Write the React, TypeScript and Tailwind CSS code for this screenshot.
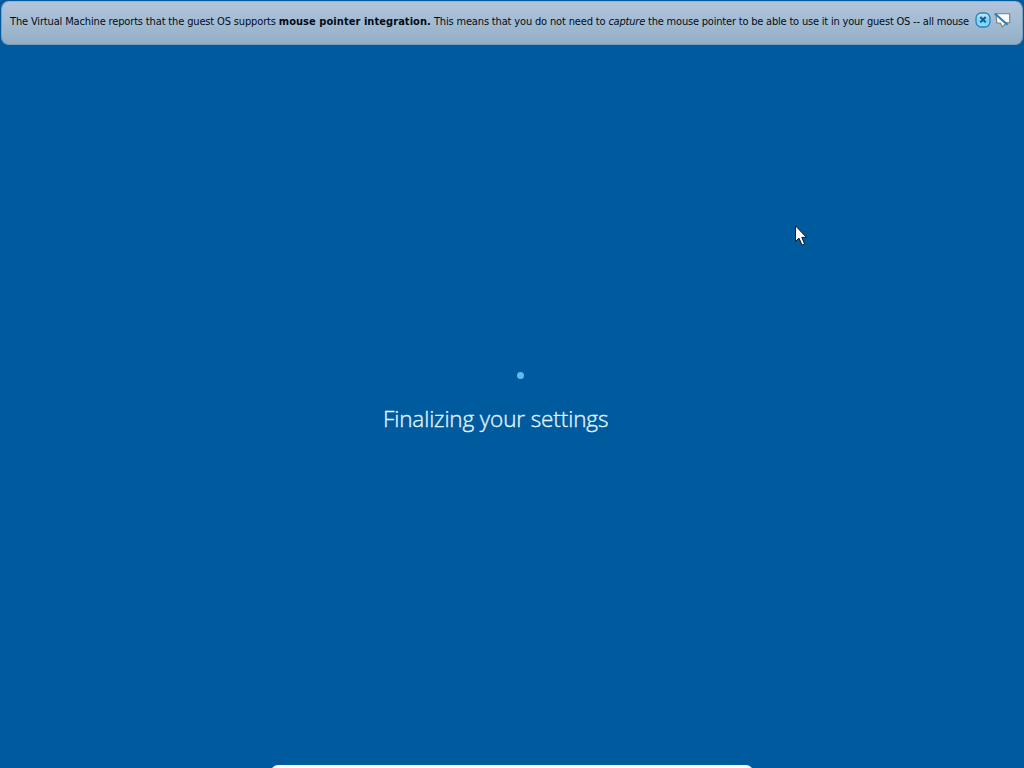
function CloseIcon() {
  return (
    <svg width="16" height="16" viewBox="0 0 16 16">
      <defs>
        <linearGradient id="closeFill" x1="0" y1="0" x2="0" y2="1">
          <stop offset="0" stopColor="#c4edfb" />
          <stop offset="0.5" stopColor="#7fd0f3" />
          <stop offset="1" stopColor="#7ee0fb" />
        </linearGradient>
      </defs>
      <rect x="1" y="1" width="14" height="14" rx="5.2" fill="url(#closeFill)" stroke="#2b83b8" strokeWidth="1.3" />
      <path d="M5.3 5 L10.7 10.4 M10.7 5 L5.3 10.4" stroke="#155a94" strokeWidth="2" />
    </svg>
  )
}

function MuteIcon() {
  return (
    <svg width="18" height="16" viewBox="0 0 18 16">
      <path d="M2 1.8 H15.7 V10.8 H12.2 L8.3 14.8 L6.3 11 H2.8 Z" fill="#fafdfd" stroke="#747f87" strokeWidth="1.1" strokeLinejoin="round" />
      <path d="M0.8 1.5 L13.5 12.8" stroke="#2d7fb5" strokeWidth="2.2" />
    </svg>
  )
}

function NoticeBar() {
  return (
    <div className="mx-px mt-px flex h-11 items-start rounded-[8px] border border-[#789fc2] border-t-[#91b2d1] bg-linear-to-b from-[#b2c3da] via-[#a2bbd3] to-[#92aec4] pl-[8px]">
      <p className="mt-[12px] w-[961px] whitespace-pre font-['DejaVu_Sans_Condensed','DejaVu_Sans',sans-serif] text-[11px] leading-4 text-[#020c16]">
        <span className="tracking-[-0.15px]">The Virtual Machine reports that the guest OS supports </span>
        <b className="tracking-[0.06px]">mouse pointer integration.</b>
        <span className="tracking-[-0.16px]"> This means that you do not need to </span>
        <i className="tracking-[-0.2px]">capture</i>
        <span className="tracking-[-0.2px]"> the mouse pointer to be able to use it in your guest OS -- all mouse</span>
      </p>
      <div className="mt-[10px] ml-1 flex gap-[3px]">
        <CloseIcon />
        <MuteIcon />
      </div>
    </div>
  )
}

export default function App() {
  return (
    <div className="relative flex h-screen w-screen flex-col overflow-hidden bg-[#005a9e]">
      <NoticeBar />
      <main className="flex flex-1 flex-col pt-[327px]">
        <div className="ml-[517px] size-[7px] rounded-full bg-[#5fb9f2]" />
        <h1 className="mt-[24px] ml-[383px] whitespace-nowrap font-['Open_Sans','Noto_Sans',sans-serif] text-[22.5px] leading-8 font-light tracking-[-0.11px] text-[#e2f5fb] [-webkit-text-stroke:0.35px_#e2f5fb]">
          Finalizing your settings
        </h1>
      </main>
      <div className="-mb-[6px] ml-[271px] h-[9px] w-[482px] shrink-0 rounded-t-[7px] bg-white" />
      <svg className="absolute top-[225px] left-[795px]" width="13" height="21" viewBox="0 0 13 21">
        <path d="M0.5 0.8 V16.5 L4 13.2 L7 20 L9.6 19 L6.8 12.4 H11.5 Z" fill="#fff" stroke="#07182a" strokeWidth="1" />
      </svg>
    </div>
  )
}
